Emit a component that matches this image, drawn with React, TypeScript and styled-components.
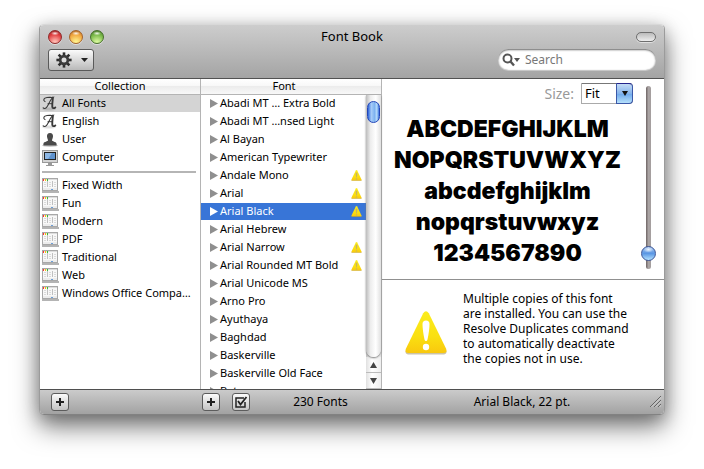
import React from "react";
import styled, { createGlobalStyle, css } from "styled-components";

const GlobalStyle = createGlobalStyle`
  * { box-sizing: border-box; }
  body {
    margin: 0;
    background: #fff;
    color: #000;
    font: 12px/17px "Noto Sans", "Open Sans", sans-serif;
  }
  button, input, select { font: inherit; color: inherit; margin: 0; }
  ul { list-style: none; margin: 0; padding: 0; }
`;

const Desktop = styled.main`
  height: 100vh;
  min-height: 320px;
  padding: 24px 39px 54px;
  display: flex;
`;

const Window = styled.section`
  flex: 1;
  min-width: 0;
  display: flex;
  flex-direction: column;
  overflow: hidden;
  border: 1px solid #9b9b9b;
  border-top-color: #d8d8d8;
  border-bottom-color: #828282;
  border-radius: 5px;
  background: #fff;
  box-shadow: 0 12px 26px rgba(0, 0, 0, 0.5), 0 4px 16px rgba(0, 0, 0, 0.22);
`;

const TitleArea = styled.header`
  flex: none;
  background: linear-gradient(#cdcdcd, #a4a4a4);
  border-bottom: 1px solid #525252;
  padding: 1px 8px 7px;
`;

const TitleBar = styled.div`
  display: grid;
  grid-template-columns: 80px 1fr 80px;
  align-items: center;
  height: 22px;
`;

const Title = styled.h1`
  margin: 0;
  padding-bottom: 2px;
  font-size: 13px;
  line-height: 20px;
  font-weight: 400;
  text-align: center;
`;

const Lights = styled.div`
  display: flex;
  gap: 7px;
`;

const Light = styled.button<{ $edge: string; $body: string; $glow: string }>`
  width: 14px;
  height: 14px;
  padding: 0;
  border: 1px solid ${(p) => p.$edge};
  border-radius: 50%;
  background:
    radial-gradient(ellipse 4px 2px at 50% 20%, rgba(255, 255, 255, 0.9), transparent),
    radial-gradient(circle at 50% 95%, ${(p) => p.$glow} 10%, ${(p) => p.$body} 65%, ${(p) => p.$edge});
  box-shadow: 0 1px 0 rgba(255, 255, 255, 0.5);
`;

const ToolbarPill = styled.button`
  justify-self: end;
  width: 20px;
  height: 10px;
  padding: 0;
  border: 1px solid #6e6e6e;
  border-radius: 5px;
  background: linear-gradient(#bbb, #ededed);
  box-shadow: 0 1px 0 rgba(255, 255, 255, 0.5);
`;

const Toolbar = styled.div`
  display: flex;
  justify-content: space-between;
  align-items: center;
  height: 23px;
`;

const ActionButton = styled.button`
  display: flex;
  align-items: center;
  justify-content: center;
  gap: 9px;
  width: 46px;
  height: 22px;
  padding: 0 0 0 2px;
  border: 1px solid #5a5a5a;
  border-radius: 3px;
  background: linear-gradient(#fbfbfb, #b9b9b9);
`;

const SearchField = styled.label`
  display: flex;
  align-items: center;
  width: 158px;
  height: 21px;
  padding: 0 10px 0 4px;
  gap: 5px;
  border-radius: 11px;
  background: #fff;
  box-shadow: inset 0 1px 2px #666, 0 1px 0 rgba(255, 255, 255, 0.35);
`;

const SearchInput = styled.input`
  flex: 1;
  min-width: 0;
  padding: 0;
  border: 0;
  outline: 0;
  background: none;
  &::placeholder { color: #777; opacity: 1; }
`;

const Content = styled.div`
  flex: 1;
  min-height: 0;
  display: grid;
  grid-template-columns: 161px 181px minmax(0, 1fr);
  grid-template-rows: minmax(0, 1fr);
`;

const Column = styled.section`
  display: flex;
  flex-direction: column;
  min-height: 0;
  border-right: 1px solid #b4b4b4;
`;

const ColumnHeader = styled.h2<{ $scroll?: boolean }>`
  flex: none;
  margin: 0;
  height: 16px;
  padding-right: ${(p) => (p.$scroll ? 14 : 0)}px;
  border-bottom: 1px solid #b4b4b4;
  background: linear-gradient(#fff 0, #f8f8f8 45%, #ececec 50%, #f8f8f8);
  font-size: 11px;
  line-height: 14px;
  font-weight: 400;
  text-align: center;
`;

const List = styled.ul`
  flex: 1;
  min-width: 0;
  min-height: 0;
  overflow: hidden;
`;

const Row = styled.button<{ $tone?: "grey" | "blue"; $inset: number }>`
  display: flex;
  align-items: center;
  width: 100%;
  height: 17px;
  margin-bottom: 1px;
  padding: 0 4px 0 ${(p) => p.$inset}px;
  gap: 2px;
  border: 0;
  background: none;
  font-size: 11px;
  line-height: 15px;
  text-align: left;
  white-space: nowrap;
  ${(p) => p.$tone === "grey" && css`background: #d4d4d4;`}
  ${(p) => p.$tone === "blue" && css`background: #3875d7; color: #fff;`}
`;

const RowLabel = styled.span`
  flex: 1;
  padding-bottom: 2px;
`;

const IconSlot = styled.span`
  flex: none;
  display: flex;
  width: 18px;
`;

const Separator = styled.li`
  height: 2px;
  margin: 5px 4px 4px 2px;
  background: #b5b5b5;
`;

const ListWithScroll = styled.div`
  flex: 1;
  min-height: 0;
  display: flex;
`;

const ScrollBar = styled.div`
  flex: none;
  width: 15px;
  display: flex;
  flex-direction: column;
  background: linear-gradient(90deg, #c2c2c2, #f1f1f1 30%, #fff 70%, #e2e2e2);
`;

const ScrollTrack = styled.div`
  flex: 1;
  padding-top: 6px;
  border-radius: 0 0 8px 8px;
  background: linear-gradient(90deg, #bdbdbd, #ededed 30%, #fff 65%, #e0e0e0);
  box-shadow: 0 1px 2px #777;
  z-index: 1;
`;

const ScrollThumb = styled.div`
  height: 22px;
  margin: 0 1px;
  border: 1px solid #2446b8;
  border-radius: 7px;
  background: linear-gradient(90deg, #2c63d8, #a8cdf8 30%, #7db2f0 60%, #b8dcfb 80%, #3c74dc);
`;

const ScrollArrow = styled.button`
  display: flex;
  align-items: center;
  justify-content: center;
  height: 16px;
  padding: 0;
  border: 0;
  border-bottom: 1px solid #bbb;
  background: linear-gradient(90deg, #e0e0e0, #fff 40%, #eee);
`;

const Detail = styled.section`
  display: flex;
  flex-direction: column;
  min-height: 0;
`;

const Preview = styled.div`
  flex: none;
  display: flex;
  height: 201px;
  border-bottom: 1px solid #909090;
`;

const PreviewMain = styled.div`
  flex: 1;
  min-width: 0;
  padding-top: 4px;
`;

const SizeField = styled.div`
  display: flex;
  justify-content: flex-end;
  align-items: center;
  gap: 7px;
  label { color: #999; font-size: 14px; }
`;

const ComboBox = styled.div`
  display: grid;
  grid-template-columns: 1fr 17px;
  width: 52px;
  height: 21px;
  font-size: 13px;
`;

const SizeSelect = styled.select`
  grid-area: 1 / 1 / 2 / 3;
  appearance: none;
  padding: 0 17px 0 3px;
  border: 1px solid #aaa;
  border-top-color: #777;
  border-radius: 0 4px 4px 0;
  background: #fff;
`;

const ComboArrow = styled.span`
  grid-area: 1 / 2;
  display: flex;
  align-items: center;
  justify-content: center;
  pointer-events: none;
  z-index: 1;
  border: 1px solid #3b58a8;
  border-top-color: #24248c;
  border-radius: 0 4px 4px 0;
  background: linear-gradient(#c4dbf5, #86b4ec 50%, #6fa9ec 52%, #b5e0fb);
`;

const Sample = styled.div`
  margin-top: 10px;
  font-family: Inter, Roboto, sans-serif;
  font-size: 23px;
  line-height: 31px;
  font-weight: 900;
  text-align: center;
  white-space: nowrap;
`;

const SliderSlot = styled.div`
  flex: none;
  width: 31px;
  padding: 7px 8px 10px;
`;

const SizeSlider = styled.input`
  appearance: none;
  writing-mode: vertical-lr;
  direction: rtl;
  display: block;
  width: 15px;
  height: 183px;
  background: none;
  &::-webkit-slider-runnable-track {
    width: 5px;
    height: 100%;
    border-radius: 3px;
    background: linear-gradient(90deg, #6e6464, #aaa4a4 50%, #a49e9e);
  }
  &::-webkit-slider-thumb {
    appearance: none;
    width: 15px;
    height: 15px;
    margin-left: -5px;
    border: 1px solid #3c5596;
    border-radius: 50%;
    background: radial-gradient(ellipse 5px 3px at 50% 20%, #eef6ff, transparent),
      linear-gradient(#a4c4ee, #5b97e4 50%, #b4e2ff);
  }
`;

const Notice = styled.div`
  flex: 1;
  display: flex;
  align-items: flex-start;
  padding: 11px 32px 0 22px;
  gap: 15px;
`;

const NoticeIcon = styled.div`
  flex: none;
  padding-top: 20px;
`;

const NoticeText = styled.p`
  margin: 0;
  font-size: 12px;
  line-height: 15px;
`;

const Footer = styled.footer`
  flex: none;
  display: grid;
  grid-template-columns: 161px 181px minmax(0, 1fr);
  height: 25px;
  border-top: 1px solid #4f4f4f;
  background: linear-gradient(#cbcbcb, #a2a2a2);
`;

const FooterCell = styled.div<{ $left: number }>`
  display: flex;
  align-items: center;
  gap: 12px;
  padding: 0 3px 1px ${(p) => p.$left}px;
`;

const FooterText = styled.span`
  flex: 1;
  text-align: center;
`;

const SmallButton = styled.button`
  display: flex;
  align-items: center;
  justify-content: center;
  width: 18px;
  height: 18px;
  padding: 0;
  border: 1px solid #5c5c5c;
  border-radius: 3px;
  background: linear-gradient(#fbfbfb, #c4c4c4);
`;

const Gear = () => (
  <svg width="16" height="16" viewBox="-8 -8 16 16" aria-hidden="true">
    {[0, 45, 90, 135].map((a) => (
      <rect key={a} x="-1.3" y="-7.6" width="2.6" height="15.2" fill="#2e2e2e" transform={`rotate(${a})`} />
    ))}
    <circle r="5.2" fill="#3a3a3a" />
    <circle r="2.5" fill="#dcdcdc" />
  </svg>
);

const Triangle = ({ d, w, h, fill }: { d: string; w: number; h: number; fill: string }) => (
  <svg width={w} height={h} viewBox={`0 0 ${w} ${h}`} aria-hidden="true">
    <path d={d} fill={fill} />
  </svg>
);

const Magnifier = () => (
  <svg width="18" height="14" viewBox="0 0 18 14" aria-hidden="true">
    <circle cx="5.5" cy="5.5" r="4" fill="none" stroke="#555" strokeWidth="2" />
    <path d="M8.5 8.5L12 12.5" stroke="#555" strokeWidth="2.4" />
    <path d="M12 5h6l-3 4z" fill="#555" />
  </svg>
);

const ScriptA = () => (
  <svg width="16" height="15" viewBox="0 0 16 15" fill="none" stroke="#3a3a3a" strokeLinecap="round" aria-hidden="true">
    <ellipse cx="7" cy="13" rx="7" ry="1.6" fill="#000" fillOpacity=".12" stroke="none" />
    <path d="M3 5.600C.9 4.600 1.500 1.800 5 1.500c2.400-.2 3.600 0 6-.1C8.200 3.400 6.600 9.200 4.400 11.600c-1.100 1.200-2.700 1.100-3.200.2" strokeWidth="1.100" />
    <path d="M10.900 1.800c-.3 3.300-.9 6.800-.6 9.100.2 1.500 1.600 1.500 3 .5" strokeWidth="1.900" />
    <path d="M6 7.700h4.500" strokeWidth="1" />
  </svg>
);

const UserIcon = () => (
  <svg width="16" height="15" viewBox="0 0 16 15" aria-hidden="true">
    <ellipse cx="8" cy="13.500" rx="8" ry="1.500" fill="#000" opacity=".2" />
    <path d="M8 1c2.200 0 3.200 1.500 3 3.600-.2 2-.9 2.700-1 3.700 0 1.200 4 1.400 4.500 3.200.2.700.2 1.200 0 2h-13c-.2-.8-.2-1.300 0-2C2 9.700 6 9.500 6 8.300c-.1-1-.8-1.700-1-3.700C4.800 2.500 5.800 1 8 1z" fill="#4a4a4a" />
  </svg>
);

const ComputerIcon = () => (
  <svg width="16" height="16" viewBox="0 0 16 16" aria-hidden="true">
    <rect x=".5" y=".5" width="15" height="12" fill="#d4d4d4" stroke="#999" />
    <rect x="2" y="2" width="12" height="8" fill="#222" />
    <rect x="3" y="3" width="10" height="6" fill="#5f93cf" />
    <path d="M3 3h7L6 9H3z" fill="#8db7e4" />
    <path d="M6 13h4v2h2v1H4v-1h2z" fill="#999" />
  </svg>
);

const CollectionIcon = () => (
  <svg width="17" height="15" viewBox="0 0 17 15" aria-hidden="true">
    <rect y="13" width="17" height="2" fill="#b4b4b4" />
    <rect x=".5" y=".5" width="15" height="12" fill="#f8f8f8" stroke="#a8a8a8" />
    <path d="M1 1h14v1H1z" fill="#ddd" />
    <rect x="1" y="1" width="1" height="2" fill="#f33" />
    <rect x="3" y="1" width="1" height="2" fill="#f5c400" />
    <rect x="5" y="1" width="1" height="2" fill="#3b3" />
    <path d="M2 4.500h2M2 6.500h2M2 8.500h2M7 4.500h2M7 6.500h2M7 8.500h2M12 4.500h2M12 6.500h2M12 8.500h2" stroke="#dadada" />
    <path d="M5.500 3v6M10.500 3v6" stroke="#c0c0c0" />
    <path d="M1 10h14v2H1z" fill="#ececec" />
    <rect x="9" y="11" width="2" height="1" fill="#6d9fd8" />
  </svg>
);

const Warning = ({ size, mark }: { size: number; mark: string }) => (
  <svg width={size} height={size} viewBox="0 0 44 44" aria-hidden="true">
    <defs>
      <linearGradient id="caution" x1="0" y1="0" x2="0" y2="1">
        <stop offset="0" stopColor="#fbec1c" />
        <stop offset=".6" stopColor="#fae011" />
        <stop offset="1" stopColor="#f9c80e" />
      </linearGradient>
    </defs>
    <path d="M4 43.500h36q3-1 2.500-3.500H1.500q-.5 2.500 2.500 3.500z" fill="#8c7a3a" opacity=".45" />
    <path d="M19.200 2.200Q22-1.600 24.800 2.200L42 37.500Q43.800 42 39.500 42h-35Q.2 42 2 37.500z" fill="url(#caution)" />
    <path d="M18.500 13q0-3.500 3.500-3.500t3.500 3.500q0 6-2 15.500-.3 1.500-1.500 1.500t-1.500-1.500q-2-9.500-2-15.500z" fill={mark} />
    <circle cx="22" cy="36" r="3.200" fill={mark} />
  </svg>
);

const Plus = () => (
  <svg width="8" height="8" viewBox="0 0 8 8" aria-hidden="true">
    <path d="M4 0v8M0 4h8" stroke="#222" strokeWidth="2" />
  </svg>
);

const CheckBoxIcon = () => (
  <svg width="14" height="12" viewBox="0 0 14 12" fill="none" aria-hidden="true">
    <path d="M11 6v5H2V2h8" stroke="#222" strokeWidth="1.500" />
    <path d="M4 5l2.500 3.500L12.500 1" stroke="#222" strokeWidth="1.800" />
  </svg>
);

const Grip = () => (
  <svg width="11" height="11" viewBox="0 0 11 11" aria-hidden="true">
    <path d="M0 11L11 0M4 11l7-7M8 11l3-3" stroke="#666" />
    <path d="M1 11.500L11.500 1M5 11.500L11.500 5M9 11.500L11.500 9" stroke="#e0e0e0" strokeWidth=".7" />
  </svg>
);

const libraries = [
  { name: "All Fonts", icon: <ScriptA /> },
  { name: "English", icon: <ScriptA /> },
  { name: "User", icon: <UserIcon /> },
  { name: "Computer", icon: <ComputerIcon /> },
];

const collections = ["Fixed Width", "Fun", "Modern", "PDF", "Traditional", "Web", "Windows Office Compa…"];

const fonts = [
  { name: "Abadi MT … Extra Bold" },
  { name: "Abadi MT …nsed Light" },
  { name: "Al Bayan" },
  { name: "American Typewriter" },
  { name: "Andale Mono", warn: true },
  { name: "Arial", warn: true },
  { name: "Arial Black", warn: true },
  { name: "Arial Hebrew" },
  { name: "Arial Narrow", warn: true },
  { name: "Arial Rounded MT Bold", warn: true },
  { name: "Arial Unicode MS" },
  { name: "Arno Pro" },
  { name: "Ayuthaya" },
  { name: "Baghdad" },
  { name: "Baskerville" },
  { name: "Baskerville Old Face" },
  { name: "Batang" },
];

const sampleLines = ["ABCDEFGHIJKLM", "NOPQRSTUVWXYZ", "abcdefghijklm", "nopqrstuvwxyz", "1234567890"];

export default function App() {
  const selected = "Arial Black";
  return (
    <>
      <GlobalStyle />
      <Desktop>
        <Window>
          <TitleArea>
            <TitleBar>
              <Lights>
                <Light aria-label="Close" $edge="#8e2a2a" $body="#df3b3d" $glow="#ffb9b0" />
                <Light aria-label="Minimize" $edge="#a5632a" $body="#f0a33c" $glow="#fff08a" />
                <Light aria-label="Zoom" $edge="#47702c" $body="#74b544" $glow="#d4f59a" />
              </Lights>
              <Title>Font Book</Title>
              <ToolbarPill aria-label="Toggle toolbar" />
            </TitleBar>
            <Toolbar>
              <ActionButton aria-label="Actions">
                <Gear />
                <Triangle d="M0 0h7L3.500 4z" w={7} h={4} fill="#222" />
              </ActionButton>
              <SearchField>
                <Magnifier />
                <SearchInput type="text" placeholder="Search" aria-label="Search" />
              </SearchField>
            </Toolbar>
          </TitleArea>

          <Content>
            <Column>
              <ColumnHeader>Collection</ColumnHeader>
              <List>
                {libraries.map((item, i) => (
                  <li key={item.name}>
                    <Row $inset={2} $tone={i === 0 ? "grey" : undefined}>
                      <IconSlot>{item.icon}</IconSlot>
                      <RowLabel>{item.name}</RowLabel>
                    </Row>
                  </li>
                ))}
                <Separator role="separator" />
                {collections.map((name) => (
                  <li key={name}>
                    <Row $inset={2}>
                      <IconSlot><CollectionIcon /></IconSlot>
                      <RowLabel>{name}</RowLabel>
                    </Row>
                  </li>
                ))}
              </List>
            </Column>

            <Column>
              <ColumnHeader $scroll>Font</ColumnHeader>
              <ListWithScroll>
                <List>
                  {fonts.map((font) => {
                    const active = font.name === selected;
                    return (
                      <li key={font.name}>
                        <Row $inset={9} $tone={active ? "blue" : undefined}>
                          <Triangle d="M0 0L8 4.500L0 9z" w={8} h={9} fill={active ? "#fff" : "#8f8f8f"} />
                          <RowLabel>{font.name}</RowLabel>
                          {font.warn && <Warning size={11} mark="#c9b45c" />}
                        </Row>
                      </li>
                    );
                  })}
                </List>
                <ScrollBar>
                  <ScrollTrack>
                    <ScrollThumb />
                  </ScrollTrack>
                  <ScrollArrow aria-label="Scroll up">
                    <Triangle d="M0 6L3.500 0L7 6z" w={7} h={6} fill="#444" />
                  </ScrollArrow>
                  <ScrollArrow aria-label="Scroll down">
                    <Triangle d="M0 0L3.500 6L7 0z" w={7} h={6} fill="#444" />
                  </ScrollArrow>
                </ScrollBar>
              </ListWithScroll>
            </Column>

            <Detail>
              <Preview>
                <PreviewMain>
                  <SizeField>
                    <label htmlFor="size">Size:</label>
                    <ComboBox>
                      <SizeSelect id="size" defaultValue="Fit">
                        <option>Fit</option>
                      </SizeSelect>
                      <ComboArrow>
                        <Triangle d="M0 0h6L3 5z" w={6} h={5} fill="#111" />
                      </ComboArrow>
                    </ComboBox>
                  </SizeField>
                  <Sample>
                    {sampleLines.map((line) => (
                      <div key={line}>{line}</div>
                    ))}
                  </Sample>
                </PreviewMain>
                <SliderSlot>
                  <SizeSlider type="range" min={0} max={100} defaultValue={5} aria-label="Preview size" />
                </SliderSlot>
              </Preview>
              <Notice>
                <NoticeIcon><Warning size={44} mark="#fff" /></NoticeIcon>
                <NoticeText>
                  Multiple copies of this font are installed. You can use the Resolve Duplicates command to
                  automatically deactivate the copies not in use.
                </NoticeText>
              </Notice>
            </Detail>
          </Content>

          <Footer>
            <FooterCell $left={11}>
              <SmallButton aria-label="Add collection"><Plus /></SmallButton>
            </FooterCell>
            <FooterCell $left={1}>
              <SmallButton aria-label="Add font"><Plus /></SmallButton>
              <SmallButton aria-label="Disable font"><CheckBoxIcon /></SmallButton>
              <FooterText>230 Fonts</FooterText>
            </FooterCell>
            <FooterCell $left={24}>
              <FooterText>Arial Black, 22 pt.</FooterText>
              <Grip />
            </FooterCell>
          </Footer>
        </Window>
      </Desktop>
    </>
  );
}
